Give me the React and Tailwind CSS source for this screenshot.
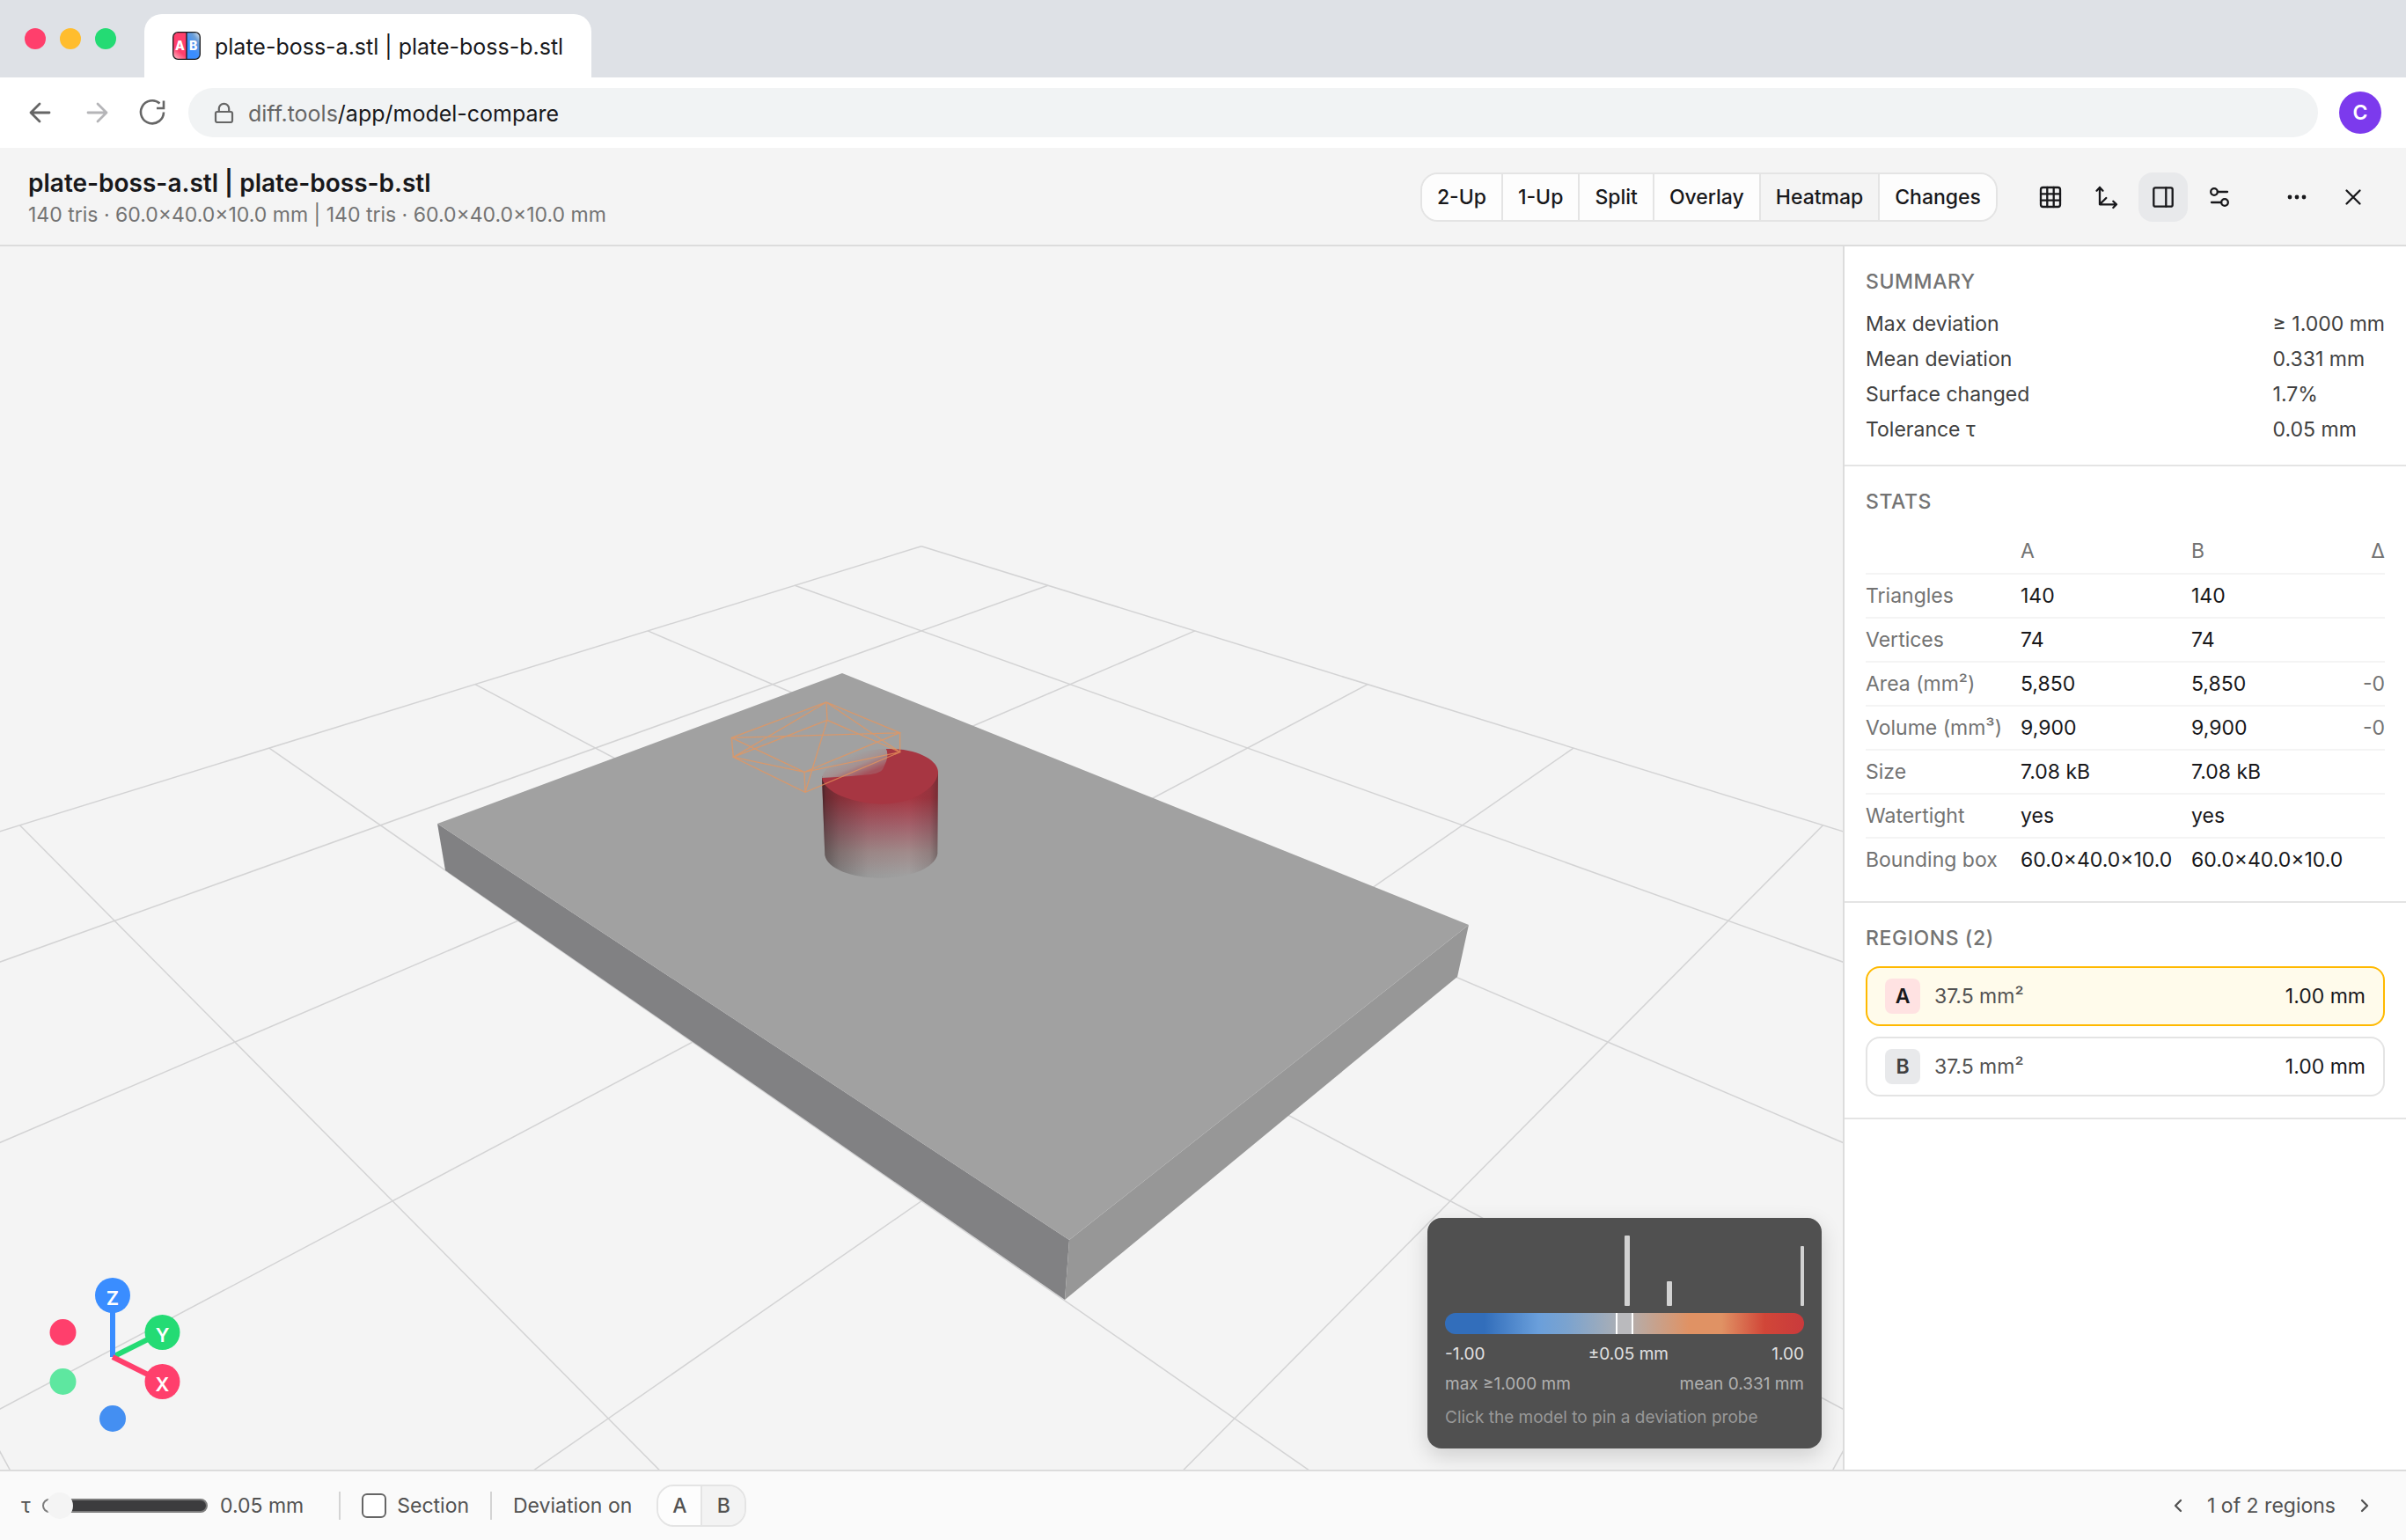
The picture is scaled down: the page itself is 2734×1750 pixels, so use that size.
import { useState } from 'react';

const views = ['2-Up', '1-Up', 'Split', 'Overlay', 'Heatmap', 'Changes'];

const summary = [
  ['Max deviation', '≥ 1.000 mm'],
  ['Mean deviation', '0.331 mm'],
  ['Surface changed', '1.7%'],
  ['Tolerance τ', '0.05 mm'],
];

const stats = [
  ['Triangles', '140', '140', ''],
  ['Vertices', '74', '74', ''],
  ['Area (mm²)', '5,850', '5,850', '-0'],
  ['Volume (mm³)', '9,900', '9,900', '-0'],
  ['Size', '7.08 kB', '7.08 kB', ''],
  ['Watertight', 'yes', 'yes', ''],
  ['Bounding box', '60.0×40.0×10.0', '60.0×40.0×10.0', ''],
];

const regions = [
  { mesh: 'A', area: '37.5 mm²', max: '1.00 mm' },
  { mesh: 'B', area: '37.5 mm²', max: '1.00 mm' },
];

// floor grid: cell (i, j) projected to the scene, (0, 0) is the far corner
const project = (i, j) => {
  const w = 1 - 0.0693 * (i + j);
  return [1047 + (133.9 * (i - j)) / w, (620.7 - 1.57 * (i + j)) / w];
};

const gridLines = [0, 1, 2, 3, 4, 5, 6].flatMap((k) => [
  [project(k, 0), project(k, 13 - k)],
  [project(0, k), project(13 - k, k)],
]);

const Icon = ({ children, className = 'size-8', box = 32, width = 2.3 }) => (
  <svg
    viewBox={`0 0 ${box} ${box}`}
    className={className}
    fill="none"
    stroke="currentColor"
    strokeWidth={width}
    strokeLinecap="round"
    strokeLinejoin="round"
    aria-hidden="true">
    {children}
  </svg>
);

const IconButton = ({ label, active, children }) => (
  <button
    type="button"
    aria-label={label}
    className={`flex size-14 items-center justify-center rounded-2xl ${active ? 'bg-[#e8e9eb]' : ''}`}>
    <Icon>{children}</Icon>
  </button>
);

const Favicon = () => (
  <svg viewBox="0 0 32 32" className="size-8" aria-hidden="true">
    <defs>
      <linearGradient id="fav-b" x1="1" y1="0" x2="0.3" y2="1">
        <stop offset="0" stopColor="#e4e8ee" />
        <stop offset="0.3" stopColor="#6b9fd8" />
        <stop offset="0.7" stopColor="#3a8dff" />
      </linearGradient>
      <linearGradient id="fav-a" x1="0.7" y1="0" x2="0.3" y2="1">
        <stop offset="0.7" stopColor="#ff3f6c" />
        <stop offset="1" stopColor="#ffa0b4" />
      </linearGradient>
    </defs>
    <path d="M16 1H6a5 5 0 0 0-5 5v20a5 5 0 0 0 5 5h10z" fill="url(#fav-a)" />
    <path d="M16 1h10a5 5 0 0 1 5 5v20a5 5 0 0 1-5 5H16z" fill="url(#fav-b)" />
    <path d="M16 1v30" stroke="#18181b" strokeWidth="1.3" />
    <rect x="0.7" y="0.7" width="30.6" height="30.6" rx="5.5" fill="none" stroke="#18181b" strokeWidth="1.3" />
    <text x="8.5" y="21" fontSize="14" fontWeight="800" textAnchor="middle" fill="#fff">A</text>
    <text x="23.7" y="21" fontSize="14" fontWeight="800" textAnchor="middle" fill="#fff">B</text>
  </svg>
);

const BrowserChrome = () => (
  <div>
    <div className="flex h-22 items-end bg-[#dee1e6] pl-7">
      <div className="flex h-22 items-center gap-4">
        <span className="size-6 rounded-full bg-[#ff3f6c]" />
        <span className="size-6 rounded-full bg-[#ffbd2e]" />
        <span className="size-6 rounded-full bg-[#24db74]" />
      </div>
      <div className="ml-8 flex h-18 items-center gap-4 rounded-t-[20px] bg-white px-8 text-[25px]">
        <Favicon />
        <span className="pt-1">plate-boss-a.stl | plate-boss-b.stl</span>
      </div>
    </div>
    <div className="flex h-20 items-center bg-white pr-7 pl-6 text-[#666]">
      <div className="flex gap-6">
        <button type="button" aria-label="Back">
          <Icon className="size-10" box={40} width={2.8}>
            <path d="M11 20h21M21 10L11 20l10 10" />
          </Icon>
        </button>
        <button type="button" aria-label="Forward" className="text-[#b5b5b8]">
          <Icon className="size-10" box={40} width={2.8}>
            <path d="M12 20h21M23 10l10 10-10 10" />
          </Icon>
        </button>
        <button type="button" aria-label="Reload">
          <Icon className="size-10" box={40} width={2.6}>
            <path d="M34 19.500A13 13 0 1 1 29.500 9.500M34 6.500V15h-8" strokeLinecap="butt" strokeLinejoin="miter" />
          </Icon>
        </button>
      </div>
      <div className="ml-[22px] flex h-14 flex-1 items-center gap-4 rounded-full bg-[#f1f3f4] pl-7 text-[25px]">
        <Icon className="size-6" box={24} width={2.2}>
          <rect x="3" y="11" width="19" height="12" rx="2" />
          <path d="M6.800 11V7.500a5.700 5.700 0 0 1 11.400 0V11" />
        </Icon>
        <span className="pt-1">
          diff.tools<span className="text-[#18181b]">/app/model-compare</span>
        </span>
      </div>
      <div className="ml-6 flex size-12 items-center justify-center rounded-full bg-[#7c3aed] text-[23px] font-semibold text-white">
        C
      </div>
    </div>
  </div>
);

const Header = ({ view, setView }) => (
  <header className="flex items-center justify-between border-b-2 border-[#dcdcdc] bg-[#f4f4f4] px-8 pt-5 pb-[18px]">
    <div>
      <h1 className="text-[28px] leading-10 font-semibold">plate-boss-a.stl | plate-boss-b.stl</h1>
      <p className="text-[23px] leading-8 text-[#737373]">
        140 tris · 60.0×40.0×10.0 mm | 140 tris · 60.0×40.0×10.0 mm
      </p>
    </div>
    <div className="flex items-center gap-8">
      <div className="flex h-14 divide-x-2 divide-[#e4e4e4] overflow-hidden rounded-[20px] border-2 border-[#e4e4e4] text-[23px] font-medium">
        {views.map((name) => (
          <button
            key={name}
            type="button"
            aria-pressed={view === name}
            onClick={() => setView(name)}
            className={`px-[17px] ${view === name ? 'bg-[#f4f4f4]' : 'bg-[#fdfdfd]'}`}>
            {name}
          </button>
        ))}
      </div>
      <div className="flex gap-2">
        <IconButton label="Grid">
          <rect x="5" y="5" width="22" height="22" rx="2.500" />
          <path d="M12.300 5v22M19.700 5v22M5 12.300h22M5 19.700h22" />
        </IconButton>
        <IconButton label="Axes">
          <path d="M4.500 8.700L8 5l3.500 3.700M8 5v19.300h19M23.300 20.700l3.700 3.600-3.700 3.700M8 24.300l7.300-7.300" />
        </IconButton>
        <IconButton label="Side panel" active>
          <rect x="5.300" y="5.300" width="21.400" height="21.400" rx="2" />
          <path d="M19.300 5.300v21.400" />
        </IconButton>
        <IconButton label="Display settings">
          <circle cx="10" cy="10" r="3.800" />
          <path d="M14 10h11M7 22h11" />
          <circle cx="22" cy="22" r="3.800" />
        </IconButton>
      </div>
      <div className="flex gap-2">
        <IconButton label="More">
          <g fill="currentColor" stroke="none">
            <circle cx="8" cy="16" r="2.400" />
            <circle cx="16" cy="16" r="2.400" />
            <circle cx="24" cy="16" r="2.400" />
          </g>
        </IconButton>
        <IconButton label="Close">
          <path d="M8.500 8.500l15 15M23.500 8.500l-15 15" />
        </IconButton>
      </div>
    </div>
  </header>
);

const Scene = () => (
  <svg
    viewBox="0 280 2094 1390"
    preserveAspectRatio="xMidYMid slice"
    className="absolute inset-0 size-full"
    role="img"
    aria-label="Deviation heatmap of the model">
    <defs>
      <linearGradient id="heat" gradientUnits="userSpaceOnUse" x1="0" y1="470" x2="0" y2="735">
        <stop offset="0" stopColor="#a73642" />
        <stop offset="0.35" stopColor="#a3606a" />
        <stop offset="0.7" stopColor="#a18b8b" />
        <stop offset="1" stopColor="#a0a0a0" />
      </linearGradient>
      <linearGradient id="shade">
        <stop offset="0" stopColor="#1c1c1c" stopOpacity="0.75" />
        <stop offset="0.03" stopColor="#1c1c1c" stopOpacity="0.45" />
        <stop offset="0.15" stopColor="#1c1c1c" stopOpacity="0.25" />
        <stop offset="0.4" stopColor="#1c1c1c" stopOpacity="0.05" />
        <stop offset="0.75" stopColor="#1c1c1c" stopOpacity="0" />
        <stop offset="0.93" stopColor="#1c1c1c" stopOpacity="0.12" />
        <stop offset="1" stopColor="#1c1c1c" stopOpacity="0.35" />
      </linearGradient>
      <linearGradient id="wedge" gradientUnits="userSpaceOnUse" x1="560" y1="325" x2="590" y2="398">
        <stop offset="0" stopColor="#a1a1a1" />
        <stop offset="0.5" stopColor="#a59090" />
        <stop offset="1" stopColor="#a5525c" />
      </linearGradient>
    </defs>
    <g stroke="#d3d3d4" strokeWidth="1.500">
      {gridLines.map(([a, b], i) => (
        <line key={i} x1={a[0]} y1={a[1]} x2={b[0]} y2={b[1]} />
      ))}
    </g>

    {/* base plate */}
    <path d="M497 936L1215 1409L1210 1477L506 989Z" fill="#818183" />
    <path d="M1215 1409L1669 1051L1656 1110L1210 1477Z" fill="#979797" />
    <path d="M957 765L1669 1051L1215 1409L497 936Z" fill="#a1a1a1" />

    {/* boss in B and wireframe of the boss region in A */}
    <g transform="translate(780 750) scale(0.3333)">
      <path d="M462 398L472 665C480 710 560 743 664 743C770 743 850 705 856 660L858 385L690 400Z" fill="url(#heat)" />
      <path d="M462 398L472 665C480 710 560 743 664 743C770 743 850 705 856 660L858 385L690 400Z" fill="url(#shade)" />
      <path
        d="M462 402C500 398 530 396 560 394C610 388 655 392 668 370C680 345 690 325 680 303C790 300 862 345 858 385C850 445 760 491 665 491C560 488 470 450 462 402Z"
        fill="#a73642"
      />
      <path
        d="M462 402C470 352 570 306 680 303C692 325 682 347 670 371C656 393 610 390 560 396C530 398 500 400 462 402Z"
        fill="url(#wedge)"
      />
      <path
        d="M477 144L154 265L402 382L728 248ZM480 205L160 331L405 451L728 314ZM477 144L480 205M154 265L160 331M402 382L405 451M728 248V314M154 265L728 248M477 144L160 331M477 144L728 314M160 331L402 382L728 314M480 205L405 451M154 265L402 382"
        fill="none"
        stroke="#ea965b"
        strokeOpacity="0.75"
        strokeWidth="4"
      />
    </g>
  </svg>
);

const AxisGizmo = () => (
  <svg viewBox="48 1444 160 192" className="absolute bottom-[34px] left-12 h-48 w-40" aria-label="Axes">
    <g strokeWidth="6">
      <path d="M128 1542l56-28" stroke="#24db74" />
      <path d="M128 1542v-70" stroke="#3a8dff" />
      <path d="M128 1542l56 28" stroke="#ff3f6c" />
    </g>
    <circle cx="71.500" cy="1514" r="15" fill="#ff3f6c" />
    <circle cx="71.500" cy="1570" r="15" fill="#5ee7a0" />
    <circle cx="128" cy="1612" r="15" fill="#448ff2" />
    <circle cx="128" cy="1472" r="20" fill="#3a8dff" />
    <circle cx="184.500" cy="1514" r="20" fill="#24db74" />
    <circle cx="184.500" cy="1570" r="20" fill="#ff3f6c" />
    <g fill="#fff" fontSize="22" fontWeight="600" textAnchor="middle">
      <text x="128" y="1483">Z</text>
      <text x="184.500" y="1525">Y</text>
      <text x="184.500" y="1581">X</text>
    </g>
  </svg>
);

const Legend = () => (
  <div className="absolute right-6 bottom-6 w-112 rounded-2xl bg-[#505050] p-5 text-[19px] leading-[30px] shadow-[0_8px_24px_rgba(0,0,0,0.16)]">
    <svg viewBox="0 0 408 80" className="h-20 w-full" fill="#d2d2d2" aria-hidden="true">
      <rect x="204" y="0" width="6" height="80" rx="1" />
      <rect x="252" y="52" width="6" height="28" rx="1" />
      <rect x="404" y="12" width="4" height="68" rx="1" />
    </svg>
    <div className="mt-2 flex h-6 justify-center rounded-full bg-[linear-gradient(to_right,#326ebb_0%,#326ebb_11%,#6a9fdb_26%,#7ba3cf_34%,#b0b0b2_50%,#e09264_68%,#e09264_77%,#d14638_89%,#c93a3c_100%)]">
      <span className="w-5 border-x-2 border-white bg-[#bababd]" />
    </div>
    <div className="mt-2 flex justify-between text-[#e2e2e2]">
      <span>-1.00</span>
      <span>±0.05 mm</span>
      <span>1.00</span>
    </div>
    <div className="mt-1 flex justify-between text-[#b0b0b0]">
      <span>max ≥1.000 mm</span>
      <span>mean 0.331 mm</span>
    </div>
    <p className="mt-2 text-[#989898]">Click the model to pin a deviation probe</p>
  </div>
);

const Section = ({ title, className = '', children }) => (
  <section className={`border-b-2 border-[#e4e4e4] px-6 pt-6 ${className}`}>
    <h2 className="text-[23px] leading-8 font-medium tracking-wide text-[#737373] uppercase">{title}</h2>
    {children}
  </section>
);

const SidePanel = () => (
  <aside className="w-160 shrink-0 border-l-2 border-[#dcdcdc] bg-white text-[23px]">
    <Section title="Summary" className="pb-5">
      <dl className="mt-3 grid grid-cols-[1fr_auto] leading-10 text-[#404040]">
        {summary.map(([name, value]) => (
          <div key={name} className="contents">
            <dt>{name}</dt>
            <dd>{value}</dd>
          </div>
        ))}
      </dl>
    </Section>

    <Section title="Stats" className="pb-[22px]">
      <table className="mt-4 w-full table-fixed text-left">
        <thead>
          <tr className="h-[50px] border-b-2 border-[#f4f4f4] text-[#737373]">
            <th className="w-44" aria-label="Property" />
            <th className="w-[194px] font-normal">A</th>
            <th className="w-[186px] font-normal">B</th>
            <th className="text-right font-normal">Δ</th>
          </tr>
        </thead>
        <tbody>
          {stats.map(([name, a, b, delta]) => (
            <tr key={name} className="h-[50px] border-b-2 border-[#f4f4f4] whitespace-nowrap last:border-0">
              <th scope="row" className="font-normal text-[#737373]">{name}</th>
              <td>{a}</td>
              <td>{b}</td>
              <td className="text-right text-[#737373]">{delta}</td>
            </tr>
          ))}
        </tbody>
      </table>
    </Section>

    <Section title="Regions (2)" className="pb-6">
      <div className="mt-4 flex flex-col gap-3">
        {regions.map(({ mesh, area, max }, i) => (
          <button
            key={mesh}
            type="button"
            className={`flex items-center gap-4 rounded-2xl border-2 px-5 py-3 ${
              i === 0 ? 'border-[#ffb900] bg-[#fffbeb]' : 'border-[#e4e4e4] bg-white'
            }`}>
            <span
              className={`flex size-10 items-center justify-center rounded-lg font-semibold ${
                i === 0 ? 'bg-[#ffe2e2]' : 'bg-[#e8e9eb] text-[#404040]'
              }`}>
              {mesh}
            </span>
            <span className="text-[#525252]">{area}</span>
            <span className="ml-auto">{max}</span>
          </button>
        ))}
      </div>
    </Section>
  </aside>
);

const Footer = () => (
  <footer className="flex h-20 shrink-0 items-center border-t-2 border-[#dcdcdc] bg-[#fafafa] pr-8 pl-6 text-[23px] text-[#525252]">
    <label htmlFor="tolerance" className="w-6">τ</label>
    <input
      id="tolerance"
      type="range"
      min="0"
      max="1"
      step="0.01"
      defaultValue="0.02"
      className="h-4 w-47 appearance-none rounded-full border-2 border-[#7c7c7c] bg-[linear-gradient(to_right,#fafafa_12%,#3c3c3e_12%)] [&::-webkit-slider-thumb]:size-[30px] [&::-webkit-slider-thumb]:appearance-none [&::-webkit-slider-thumb]:rounded-full [&::-webkit-slider-thumb]:bg-[#f4f4f4]"
    />
    <output htmlFor="tolerance" className="ml-3.5">0.05 mm</output>
    <span className="ml-10 h-8 w-0.5 bg-[#d4d4d4]" />
    <label className="ml-6 flex items-center gap-3">
      <input type="checkbox" className="size-7 appearance-none rounded-md border-2 border-[#666] bg-white" />
      Section
    </label>
    <span className="ml-6 h-8 w-0.5 bg-[#d4d4d4]" />
    <span className="ml-6">Deviation on</span>
    <div className="ml-7 flex h-12 divide-x-2 divide-[#e4e4e4] overflow-hidden rounded-[20px] border-2 border-[#e4e4e4] font-medium">
      <button type="button" className="w-[50px] bg-[#fdfdfd]">A</button>
      <button type="button" className="w-12 bg-[#f3f3f3]">B</button>
    </div>
    <div className="ml-auto flex items-center gap-4">
      <button type="button" aria-label="Previous region">
        <Icon>
          <path d="M18 10l-6 6 6 6" />
        </Icon>
      </button>
      <span>1 of 2 regions</span>
      <button type="button" aria-label="Next region">
        <Icon>
          <path d="M14 10l6 6-6 6" />
        </Icon>
      </button>
    </div>
  </footer>
);

const App = () => {
  const [view, setView] = useState('Heatmap');

  return (
    <div className="flex min-h-screen flex-col bg-white font-['Inter','Liberation_Sans',sans-serif] text-[#18181b]">
      <BrowserChrome />
      <Header view={view} setView={setView} />
      <div className="flex flex-1">
        <main className="relative flex-1 overflow-hidden bg-[#f4f4f4]">
          <Scene />
          <AxisGizmo />
          <Legend />
        </main>
        <SidePanel />
      </div>
      <Footer />
    </div>
  );
};

export default App;
